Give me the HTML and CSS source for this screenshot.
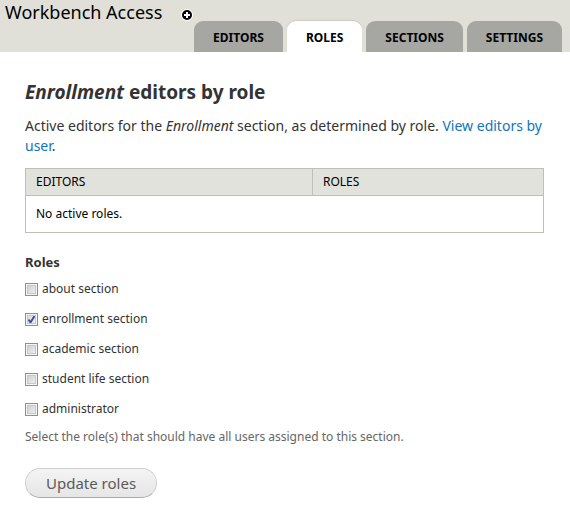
FILE: index.html
```html
<!DOCTYPE html>
<html lang="en">
<head>
<meta charset="utf-8">
<meta name="viewport" content="width=device-width, initial-scale=1">
<title>Workbench Access</title>
<link rel="stylesheet" href="styles.css">
</head>
<body>
<header class="branding">
  <div class="title-row">
    <h1 class="page-title">Workbench Access</h1>
    <button class="shortcut" type="button" aria-label="Add to shortcuts">
      <svg viewBox="0 0 12 12" width="12" height="12" aria-hidden="true">
        <circle cx="6" cy="6" r="6" fill="#fff"/>
        <circle cx="6" cy="6" r="5" fill="#000"/>
        <path d="M6 3v6M3 6h6" stroke="#fff" stroke-width="2"/>
      </svg>
    </button>
  </div>
  <nav class="tabs">
    <a class="tab" href="#editors">EDITORS</a>
    <a class="tab active" href="#roles">ROLES</a>
    <a class="tab" href="#sections">SECTIONS</a>
    <a class="tab" href="#settings">SETTINGS</a>
  </nav>
</header>
<main class="content">
  <h2 class="heading"><em>Enrollment</em> editors by role</h2>
  <p class="intro">Active editors for the <em>Enrollment</em> section, as determined by role. <a href="#editors">View editors by user</a>.</p>
  <table class="editors">
    <thead>
      <tr><th class="col-editors" scope="col">EDITORS</th><th scope="col">ROLES</th></tr>
    </thead>
    <tbody>
      <tr><td colspan="2">No active roles.</td></tr>
    </tbody>
  </table>
  <form>
    <fieldset class="roles">
      <legend>Roles</legend>
      <label class="role"><input type="checkbox">about section</label>
      <label class="role"><input type="checkbox" checked>enrollment section</label>
      <label class="role"><input type="checkbox">academic section</label>
      <label class="role"><input type="checkbox">student life section</label>
      <label class="role"><input type="checkbox">administrator</label>
    </fieldset>
    <p class="description">Select the role(s) that should have all users assigned to this section.</p>
    <button class="submit" type="button">Update roles</button>
  </form>
</main>
</body>
</html>
```
FILE: styles.css
```css
* {
  box-sizing: border-box;
}

body {
  margin: 0;
  background: #fff;
  color: #333;
  font: 14px/20px "Noto Sans", "Open Sans", sans-serif;
}

.branding {
  background: #e0e0d8;
}

.title-row {
  display: flex;
  align-items: flex-start;
  gap: 19px;
  height: 21px;
  padding-left: 5px;
}

.page-title {
  margin: 0;
  color: #000;
  font-size: 18px;
  font-weight: 400;
  line-height: 25px;
}

.shortcut {
  display: flex;
  margin-top: 9px;
  padding: 0;
  border: 0;
  background: none;
}

.tabs {
  display: flex;
  justify-content: flex-end;
  gap: 4px;
  padding-right: 8px;
}

.tab {
  height: 31px;
  padding: 0 19px;
  border-radius: 9px 9px 0 0;
  background: #a6a7a2;
  color: #000;
  font-size: 12px;
  font-weight: 700;
  line-height: 33px;
  text-decoration: none;
}

.tab.active {
  background: #fff;
  box-shadow: 0 -1px 1px #cbccc5;
}

.content {
  padding: 26px 26px 7px 25px;
}

.heading {
  margin: 0 0 10px;
  font-size: 19px;
  font-weight: 700;
  line-height: 28px;
}

.intro {
  margin: 0 0 12px;
}

.intro a {
  color: #0f74bd;
  text-decoration: none;
}

.editors {
  width: 100%;
  border-collapse: collapse;
  color: #000;
  font-size: 12px;
}

.editors th,
.editors td {
  padding: 3px 10px;
  border: 1px solid #bebfb9;
  font-weight: 400;
  text-align: left;
}

.editors th {
  background: #e1e2dc;
}

.editors td {
  padding: 8px 10px;
}

.col-editors {
  width: 287px;
}

.roles {
  display: grid;
  gap: 10px;
  margin: 19px 0 0;
  padding: 0;
  border: 0;
}

.roles legend {
  margin-bottom: 7px;
  padding: 0;
  font-size: 13px;
  font-weight: 700;
}

.role {
  display: flex;
  align-items: center;
  gap: 4px;
  font-size: 12px;
}

.role input {
  appearance: none;
  width: 13px;
  height: 13px;
  margin: 0;
  border: 1px solid #8e8f8f;
  background: linear-gradient(135deg, #c4c8cc, #f5f5f5);
  box-shadow: inset 0 0 0 1px #f4f4f4, inset 0 0 0 2px #c5c9cd;
}

.role input:checked {
  background: url("data:image/svg+xml,%3Csvg xmlns='http://www.w3.org/2000/svg' viewBox='0 0 11 11'%3E%3Cpath d='M2.5 5.5L4.5 8.5L8.5 2' fill='none' stroke='%233e4e9e' stroke-width='2'/%3E%3C/svg%3E") center / 11px 11px no-repeat, linear-gradient(135deg, #d3d8e0, #f8f8f8);
}

.description {
  margin: 8px 0 21px;
  color: #666;
  font-size: 12px;
}

.submit {
  display: block;
  height: 30px;
  padding: 0 20px;
  border: 1px solid #cfcfcf;
  border-bottom-color: #ababab;
  border-radius: 15px;
  background: linear-gradient(#f4f4f4, #e6e6e6);
  color: #5a5a5a;
  font: 15px/28px "Noto Sans", "Open Sans", sans-serif;
}
```
